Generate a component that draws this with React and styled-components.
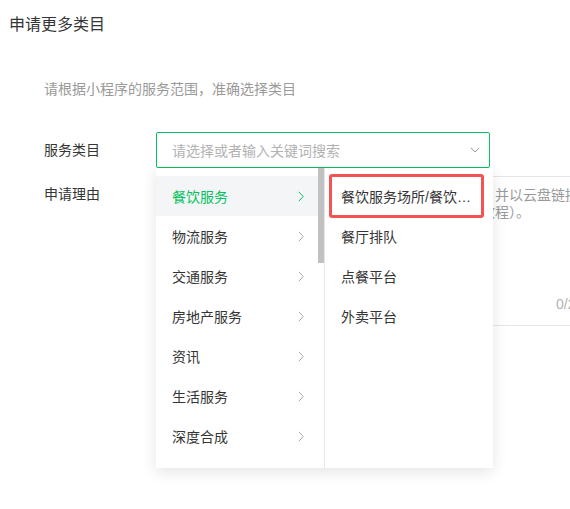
import React from "react";
import styled, { createGlobalStyle } from "styled-components";

const GREEN = "#07c160";

const GlobalStyle = createGlobalStyle`
  html, body {
    margin: 0;
    padding: 0;
    background: #fff;
    overflow: hidden;
  }
  body {
    font-family: "Liberation Sans", "Noto Sans CJK SC", sans-serif;
    color: #353535;
  }
  * { box-sizing: border-box; }
`;

const Page = styled.div`
  width: 570px;
  height: 509px;
  padding-top: 13px;
  overflow: hidden;
`;

const Title = styled.h1`
  margin: 0 0 0 9px;
  font-size: 16px;
  font-weight: 400;
  line-height: 24px;
  color: #353535;
`;

const Section = styled.div`
  padding-left: 44px;
  margin-top: 42px;
`;

const Hint = styled.p`
  margin: 0;
  font-size: 14px;
  line-height: 20px;
  color: #9a9a9a;
`;

const Form = styled.div`
  margin-top: 33px;
  display: flex;
  flex-direction: column;
  gap: 8px;
`;

const Row = styled.div`
  display: flex;
  align-items: ${(p) => (p.$top ? "flex-start" : "center")};
`;

const Label = styled.div`
  width: 112px;
  flex: none;
  font-size: 14px;
  line-height: 20px;
  color: #353535;
  padding-top: ${(p) => (p.$top ? "8px" : "0")};
`;

const SelectWrap = styled.div`
  position: relative;
  width: 334px;
  flex: none;
  z-index: 2;
`;

const SelectBox = styled.div`
  height: 36px;
  border: 1px solid ${GREEN};
  border-radius: 2px;
  background: #fff;
  display: flex;
  align-items: center;
  justify-content: space-between;
  padding: 0 9px 0 15px;
`;

const SelectPlaceholder = styled.span`
  font-size: 14px;
  color: #b2b2b2;
`;

const Panel = styled.div`
  position: absolute;
  top: 100%;
  left: 0;
  width: 337px;
  height: 300px;
  background: #fff;
  display: flex;
  box-shadow: 0 4px 14px rgba(0, 0, 0, 0.11);
`;

const MainColumn = styled.div`
  position: relative;
  width: 168px;
  flex: none;
  height: 100%;
  overflow: hidden;
  padding: 8px 6px 8px 0;
`;

const ScrollThumb = styled.span`
  position: absolute;
  top: 0;
  right: 0;
  width: 6px;
  height: 95px;
  background: #c1c1c1;
`;

const MenuItem = styled.div`
  height: 40px;
  display: flex;
  align-items: center;
  justify-content: space-between;
  padding: 0 14px 0 16px;
  font-size: 14px;
  color: ${(p) => (p.$active ? GREEN : "#353535")};
  background: ${(p) => (p.$active ? "#f4f5f7" : "transparent")};
`;

const SubColumn = styled.div`
  flex: 1;
  min-width: 0;
  border-left: 1px solid #e7e7e7;
  padding: 8px 0;
`;

const SubItem = styled.div`
  position: relative;
  height: 40px;
  display: flex;
  align-items: center;
  padding: 0 16px;
  font-size: 14px;
  color: #353535;
`;

const SubText = styled.span`
  display: block;
  min-width: 0;
  white-space: nowrap;
  overflow: hidden;
  text-overflow: ellipsis;
`;

const Marker = styled.span`
  position: absolute;
  left: 4px;
  right: 9px;
  top: -2px;
  bottom: -2px;
  border: 3px solid #f35453;
  border-radius: 3px;
  pointer-events: none;
`;

const ReasonBox = styled.div`
  position: relative;
  flex: none;
  width: 448px;
  height: 150px;
  border: 1px solid #e6e6e6;
  border-radius: 2px;
  padding: 10px 16px;
  overflow: hidden;
`;

const ReasonLine = styled.div`
  font-size: 14px;
  line-height: 17px;
  color: #9a9a9a;
  white-space: nowrap;
`;

const Counter = styled.span`
  position: absolute;
  right: 12px;
  bottom: 11px;
  font-size: 14px;
  line-height: 20px;
  color: #b2b2b2;
`;

const ChevronRight = ({ color }) => (
  <svg width="6" height="11" viewBox="0 0 6 11" fill="none">
    <path d="M0.8 0.8 L5.2 5.5 L0.8 10.2" stroke={color} strokeWidth="1" />
  </svg>
);

const ChevronDown = () => (
  <svg width="10" height="6" viewBox="0 0 10 6" fill="none">
    <path d="M0.8 0.8 L5 5 L9.2 0.8" stroke="#9a9a9a" strokeWidth="1" />
  </svg>
);

const categories = ["餐饮服务", "物流服务", "交通服务", "房地产服务", "资讯", "生活服务", "深度合成"];

const subs = ["餐饮服务场所/餐饮服务管理企业", "餐厅排队", "点餐平台", "外卖平台"];

export default function App() {
  return (
    <>
      <GlobalStyle />
      <Page>
        <Title>申请更多类目</Title>
        <Section>
          <Hint>请根据小程序的服务范围，准确选择类目</Hint>
          <Form>
            <Row>
              <Label>服务类目</Label>
              <SelectWrap>
                <SelectBox>
                  <SelectPlaceholder>请选择或者输入关键词搜索</SelectPlaceholder>
                  <ChevronDown />
                </SelectBox>
                <Panel>
                  <MainColumn>
                    {categories.map((c, i) => (
                      <MenuItem key={c} $active={i === 0}>
                        <span>{c}</span>
                        <ChevronRight color={i === 0 ? GREEN : "#a8a8a8"} />
                      </MenuItem>
                    ))}
                    <ScrollThumb />
                  </MainColumn>
                  <SubColumn>
                    {subs.map((s, i) => (
                      <SubItem key={s}>
                        <SubText>{s}</SubText>
                        {i === 0 && <Marker />}
                      </SubItem>
                    ))}
                  </SubColumn>
                </Panel>
              </SelectWrap>
            </Row>
            <Row $top>
              <Label $top>申请理由</Label>
              <ReasonBox>
                <ReasonLine>请详细说明申请理由，相关资质证明材料请打包好，并以云盘链接形式提供（</ReasonLine>
                <ReasonLine>分享链接需长期有效且无需提取码，具体参考上传教程）。</ReasonLine>
                <Counter>0/200</Counter>
              </ReasonBox>
            </Row>
          </Form>
        </Section>
      </Page>
    </>
  );
}
